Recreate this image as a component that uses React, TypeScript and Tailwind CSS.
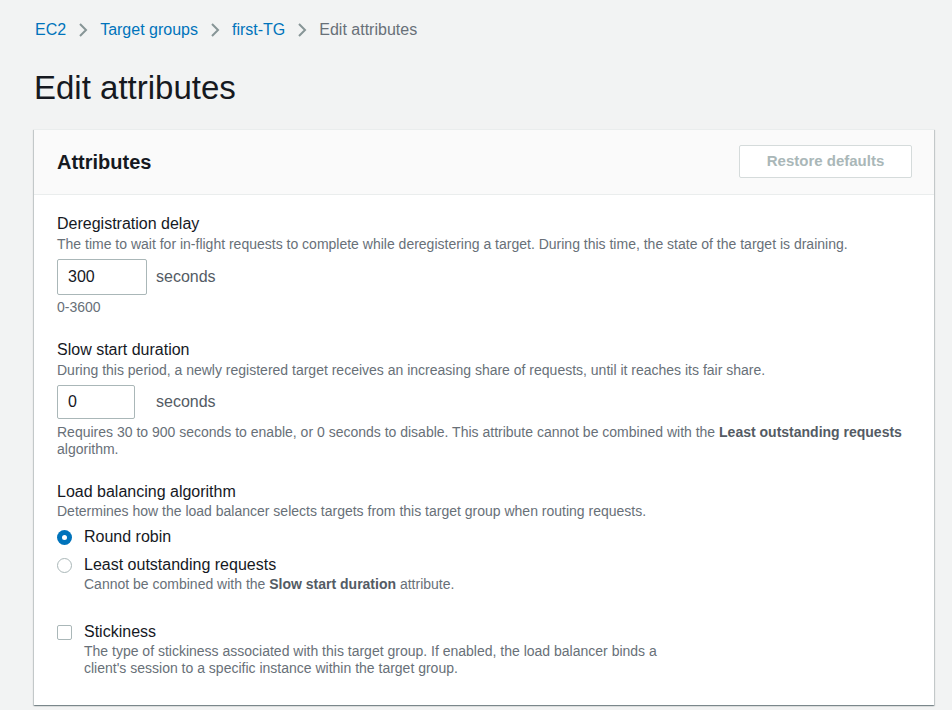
import React from "react";

function Chevron() {
  return (
    <svg width="12" height="16" viewBox="0 0 12 16" className="shrink-0">
      <path d="M3 2 L9 8 L3 14" fill="none" stroke="#879596" strokeWidth="2" />
    </svg>
  );
}

export default function App() {
  return (
    <div
      className="min-h-[710px] w-[952px] bg-[#f2f3f3] text-[#16191f] pl-[34px] pt-[20px]"
      style={{ fontFamily: '"Liberation Sans", Arial, sans-serif' }}
    >
      {/* Breadcrumb */}
      <nav className="flex items-center gap-[11px] text-[16px] leading-[20px] pl-[1px]">
        <span className="text-[#0073bb]">EC2</span>
        <Chevron />
        <span className="text-[#0073bb]">Target groups</span>
        <Chevron />
        <span className="text-[#0073bb]">first-TG</span>
        <Chevron />
        <span className="text-[#687078]">Edit attributes</span>
      </nav>

      <h1 className="mt-[28px] text-[33px] leading-[40px] font-normal text-[#16191f]">
        Edit attributes
      </h1>

      {/* Card */}
      <div className="mt-[21px] w-[900px] bg-white shadow-[0_1px_1px_0_rgba(0,28,36,0.3),1px_1px_1px_0_rgba(0,28,36,0.15),-1px_1px_1px_0_rgba(0,28,36,0.15)] border-t border-[#eaeded]">
        <div className="flex h-[65px] items-center justify-between border-b border-[#eaeded] bg-[#fafafa] pl-[23px] pr-[22px]">
          <h2 className="text-[20px] font-bold leading-[24px]">Attributes</h2>
          <button className="-mt-[1px] h-[33px] w-[173px] rounded-[2px] border border-[#d5dbdb] bg-white text-[15px] font-bold text-[#aab7b8]">
            Restore defaults
          </button>
        </div>

        <div className="pl-[23px] pr-[22px] pt-[19px] pb-[28px]">
          {/* Deregistration delay */}
          <div className="text-[16px] leading-[20px]">Deregistration delay</div>
          <div className="mt-[2px] text-[14px] leading-[17px] text-[#687078]">
            The time to wait for in-flight requests to complete while deregistering a target. During this time, the
            state of the target is draining.
          </div>
          <div className="mt-[6px] flex items-center gap-[9px]">
            <div className="flex h-[36px] w-[90px] items-center rounded-[2px] border border-[#aab7b8] px-[10px] text-[16px]">
              300
            </div>
            <span className="text-[16px] text-[#545b64]">seconds</span>
          </div>
          <div className="mt-[4px] text-[14px] leading-[17px] text-[#687078]">0-3600</div>

          {/* Slow start */}
          <div className="mt-[24px] text-[16px] leading-[20px]">Slow start duration</div>
          <div className="mt-[2px] text-[14px] leading-[17px] text-[#687078]">
            During this period, a newly registered target receives an increasing share of requests, until it reaches its
            fair share.
          </div>
          <div className="mt-[6px] flex items-center gap-[21px]">
            <div className="flex h-[34px] w-[78px] items-center rounded-[2px] border border-[#aab7b8] px-[10px] text-[16px]">
              0
            </div>
            <span className="text-[16px] text-[#545b64]">seconds</span>
          </div>
          <div className="mt-[5px] text-[14px] leading-[17px] text-[#687078]">
            Requires 30 to 900 seconds to enable, or 0 seconds to disable. This attribute cannot be combined with the{" "}
            <b className="font-bold text-[#545b64]">Least outstanding requests</b> algorithm.
          </div>

          {/* Load balancing */}
          <div className="mt-[24px] text-[16px] leading-[20px]">Load balancing algorithm</div>
          <div className="mt-[1px] text-[14px] leading-[17px] text-[#687078]">
            Determines how the load balancer selects targets from this target group when routing requests.
          </div>
          <div className="mt-[7px] flex items-center gap-[12px]">
            <span className="flex h-[15px] w-[15px] items-center justify-center rounded-full bg-[#0073bb]">
              <span className="h-[5px] w-[5px] rounded-full bg-white" />
            </span>
            <span className="text-[16px] leading-[20px]">Round robin</span>
          </div>
          <div className="mt-[8px] flex items-start gap-[12px]">
            <span className="mt-[3px] h-[15px] w-[15px] rounded-full border border-[#aab7b8] bg-white" />
            <div>
              <div className="text-[16px] leading-[20px]">Least outstanding requests</div>
              <div className="mt-[1px] text-[14px] leading-[17px] text-[#687078]">
                Cannot be combined with the <b className="font-bold text-[#545b64]">Slow start duration</b> attribute.
              </div>
            </div>
          </div>

          {/* Stickiness */}
          <div className="mt-[29px] flex items-start gap-[12px]">
            <span className="mt-[3px] h-[15px] w-[15px] rounded-[2px] border border-[#aab7b8] bg-white" />
            <div>
              <div className="text-[16px] leading-[20px]">Stickiness</div>
              <div className="mt-[1px] max-w-[580px] text-[14px] leading-[17px] text-[#687078]">
                The type of stickiness associated with this target group. If enabled, the load balancer binds a client's
                session to a specific instance within the target group.
              </div>
            </div>
          </div>
        </div>
      </div>
    </div>
  );
}
